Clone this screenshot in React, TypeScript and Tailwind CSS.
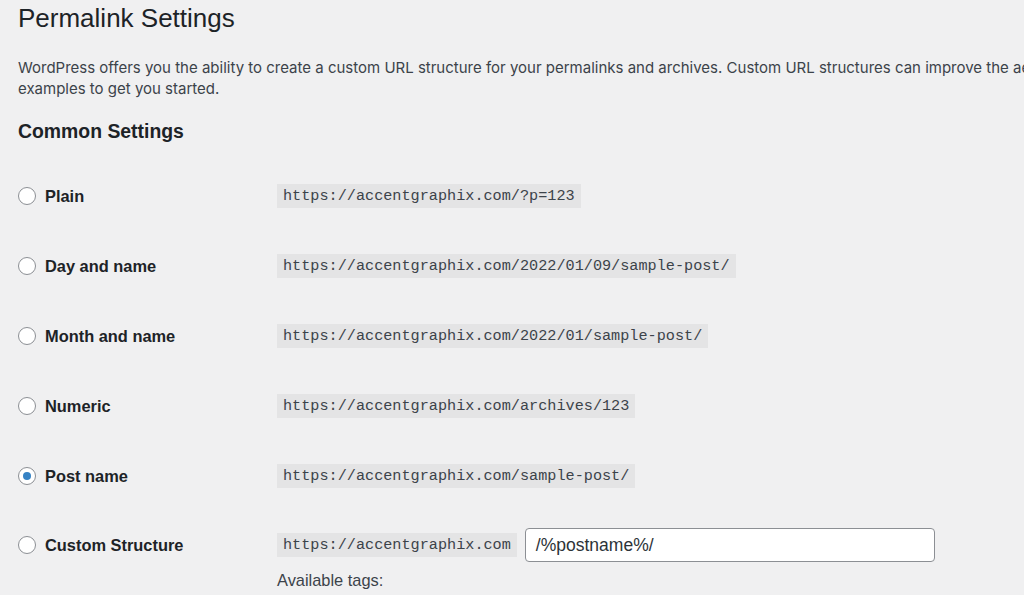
import React from "react";

const rows = [
  { label: "Plain", url: "https://accentgraphix.com/?p=123", checked: false },
  { label: "Day and name", url: "https://accentgraphix.com/2022/01/09/sample-post/", checked: false },
  { label: "Month and name", url: "https://accentgraphix.com/2022/01/sample-post/", checked: false },
  { label: "Numeric", url: "https://accentgraphix.com/archives/123", checked: false },
  { label: "Post name", url: "https://accentgraphix.com/sample-post/", checked: true },
];

function Radio({ checked }: { checked: boolean }) {
  return (
    <span className="flex h-[18px] w-[18px] shrink-0 items-center justify-center rounded-full border border-[#8c8f94] bg-white">
      {checked && <span className="h-[8px] w-[8px] rounded-full bg-[#3582c4]" />}
    </span>
  );
}

function Label({ text, checked }: { text: string; checked: boolean }) {
  return (
    <div className="flex w-[259px] shrink-0 items-center gap-[9px]">
      <Radio checked={checked} />
      <span className="text-[16.4px] font-bold leading-[20px] text-[#1d2327]">{text}</span>
    </div>
  );
}

function Code({ children }: { children: React.ReactNode }) {
  return (
    <code className="flex h-[24px] items-center bg-[#e4e4e5] px-[6px] font-['Liberation_Mono',monospace] text-[15.2px] text-[#3c434a]">
      {children}
    </code>
  );
}

export default function App() {
  return (
    <div className="h-[595px] w-[1024px] overflow-hidden bg-[#f0f0f1] pl-[18px] font-['Liberation_Sans',Arial,sans-serif] text-[#3c434a]">
      <h1 className="pt-[2px] text-[26px] leading-[32px] text-[#1d2327]">Permalink Settings</h1>
      <div className="mt-[22.5px] w-[1006px] overflow-hidden">
        <p className="whitespace-nowrap font-['Inter',sans-serif] text-[15px] leading-[21px]">
          WordPress offers you the ability to create a custom URL structure for your permalinks and archives. Custom URL structures can improve the aesthetics, usability, and forward-compatibility of your links. A number of tags are available, and here are some
          <br />
          examples to get you started.
        </p>
      </div>
      <h2 className="mt-[20px] text-[19.4px] font-bold leading-[25px] text-[#1d2327]">Common Settings</h2>
      <div className="mt-[17.5px] flex flex-col">
        {rows.map((r) => (
          <div key={r.label} className="flex h-[70px] items-center">
            <Label text={r.label} checked={r.checked} />
            <Code>{r.url}</Code>
          </div>
        ))}
        <div className="pt-[17px]">
          <div className="flex h-[34px] items-center">
            <Label text="Custom Structure" checked={false} />
            <Code>https://accentgraphix.com</Code>
            <div className="ml-[8px] flex h-[34px] w-[410px] items-center rounded-[4px] border border-[#8c8f94] bg-white pl-[10px] text-[17.5px] text-[#2c3338]">
              /%postname%/
            </div>
          </div>
          <div className="mt-[8px] pl-[259px] text-[16.4px] leading-[20px] text-[#3c434a]">Available tags:</div>
        </div>
      </div>
    </div>
  );
}
